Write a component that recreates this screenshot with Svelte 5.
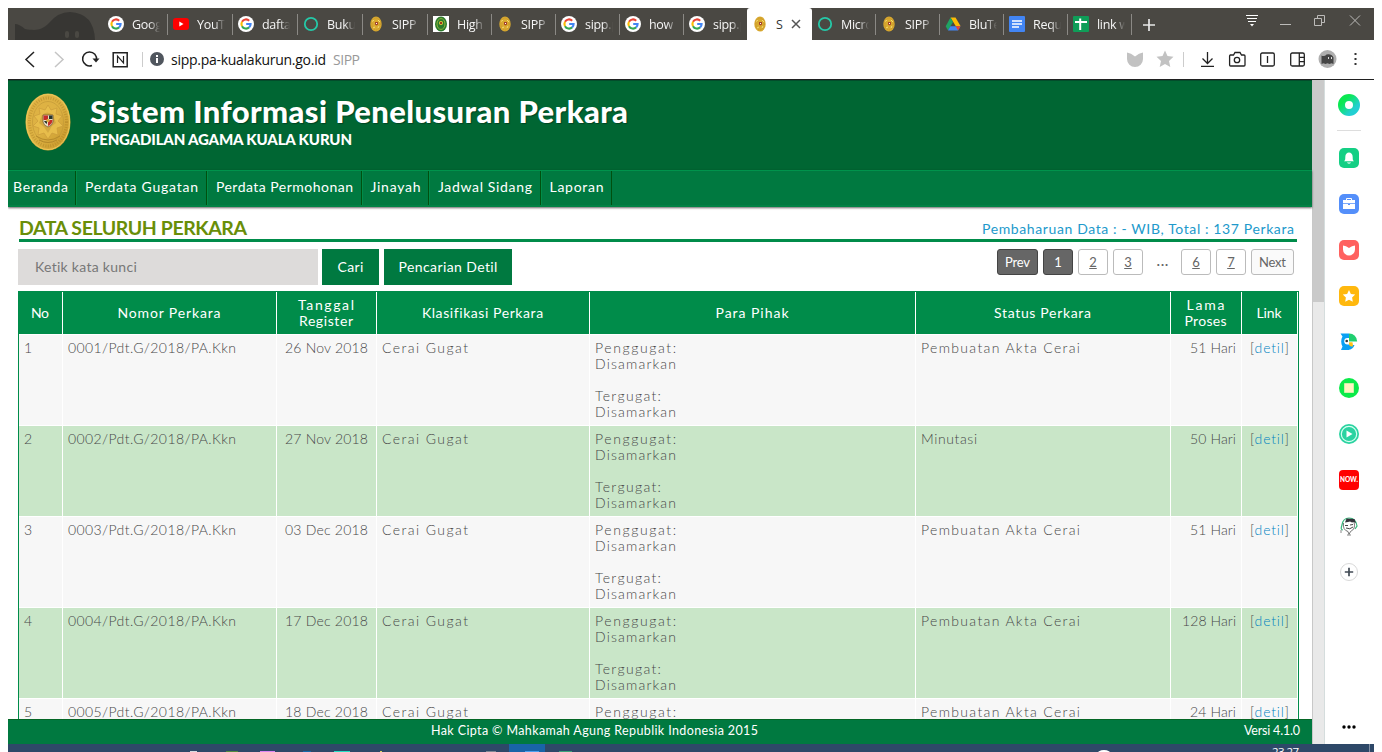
<script>
  const tabs = [
    ['google', 'Goog', 65], ['youtube', 'YouT', 65], ['google', 'dafta', 65], ['ring', 'Buku', 65],
    ['seal', 'SIPP', 65], ['badge', 'High', 64], ['seal', 'SIPP', 64], ['google', 'sipp.p', 64],
    ['google', 'how', 64], ['google', 'sipp.p', 63], ['seal', 'S', 65], ['ring', 'Micro', 64],
    ['seal', 'SIPP', 64], ['drive', 'BluTe', 64], ['docs', 'Requ', 64], ['sheets', 'link w', 64]
  ];
  const menu = [
    ['Beranda', 55, 68], ['Perdata Gugatan', 113, 131], ['Perdata Permohonan', 137, 155],
    ['Jinayah', 50, 67], ['Jadwal Sidang', 94, 112], ['Laporan', 54, 71]
  ];
  const heads = [
    [['No', 18]], [['Nomor Perkara', 103]], [['Tanggal', 56], ['Register', 54]],
    [['Klasifikasi Perkara', 121]], [['Para Pihak', 73]], [['Status Perkara', 97]],
    [['Lama', 38], ['Proses', 42]], [['Link', 25]]
  ];
  const rows = [
    ['1', '0001/Pdt.G/2018/PA.Kkn', '26 Nov 2018', 'Pembuatan Akta Cerai', 159, '51 Hari', 46],
    ['2', '0002/Pdt.G/2018/PA.Kkn', '27 Nov 2018', 'Minutasi', 56, '50 Hari', 46],
    ['3', '0003/Pdt.G/2018/PA.Kkn', '03 Dec 2018', 'Pembuatan Akta Cerai', 159, '51 Hari', 46],
    ['4', '0004/Pdt.G/2018/PA.Kkn', '17 Dec 2018', 'Pembuatan Akta Cerai', 159, '128 Hari', 54],
    ['5', '0005/Pdt.G/2018/PA.Kkn', '18 Dec 2018', 'Pembuatan Akta Cerai', 159, '24 Hari', 46]
  ];
  const side = ['bell', 'case', 'pocket', 'star', 'bird', 'note', 'play', 'now', 'face', 'plus'];

  // Tracks a label out so that it spans the given width.
  function fit(node, width) {
    const gap = (width - node.getBoundingClientRect().width) / Math.max(1, node.textContent.length - 1);
    node.style.letterSpacing = `${gap}px`;
    node.style.marginRight = `${-gap}px`;
  }
</script>

{#snippet t(text, width)}<span class="t" use:fit={width}>{text}</span>{/snippet}

{#snippet seal()}
  <svg width="16" height="16" viewBox="0 0 16 16"><ellipse cx="8" cy="8" rx="5.7" ry="7.6" fill="#d9a92f" /><ellipse cx="8" cy="8" rx="4.2" ry="6" fill="none" stroke="#c4932a" stroke-dasharray="1 1.2" /><path d="M4 5.5 6 4M5 12l2-1M10 4l2 2M10 12l1-2" stroke="#f6dc73" /><path d="M7 6h3v2.500l-1.500 1L7 8.500z" fill="#a5432a" /><path d="M8 7h1v1H8z" fill="#fff" /></svg>
{/snippet}

{#snippet favicon(kind)}
  {#if kind === 'google'}
    <svg width="16" height="16" viewBox="0 0 16 16"><circle cx="8" cy="8" r="8" fill="#fff" /><g fill="none" stroke-width="2.1"><path d="M11.2 4.7A4.6 4.6 0 0 0 4 5.8" stroke="#ea4335" /><path d="M4 5.8a4.6 4.6 0 0 0 0 4.4" stroke="#fbbc05" /><path d="M4 10.2a4.6 4.6 0 0 0 7.1 1.2" stroke="#34a853" /><path d="M11.1 11.4A4.5 4.5 0 0 0 12.6 8H8.2" stroke="#4285f4" /></g></svg>
  {:else if kind === 'youtube'}
    <svg width="16" height="16" viewBox="0 0 16 16"><rect x="0" y="2" width="16" height="12" rx="3" fill="#f00" /><path d="m6.3 5.6 4.2 2.4-4.2 2.4z" fill="#fff" /></svg>
  {:else if kind === 'ring'}
    <svg width="16" height="16" viewBox="0 0 16 16"><circle cx="8" cy="8" r="6.2" fill="none" stroke="#25c9a8" stroke-width="1.8" /></svg>
  {:else if kind === 'seal'}
    {@render seal()}
  {:else if kind === 'badge'}
    <svg width="16" height="16" viewBox="0 0 16 16"><path d="M0 0h16v16H0z" fill="#fff" /><ellipse cx="8" cy="8" rx="6" ry="7.5" fill="#2c7a2c" /><ellipse cx="8" cy="8" rx="4" ry="5.4" fill="none" stroke="#8bb53b" /><circle cx="8" cy="7" r="2" fill="#e3c43a" /><path d="M7 6h2v2H7z" fill="#9b3a1d" /></svg>
  {:else if kind === 'drive'}
    <svg width="16" height="16" viewBox="0 0 16 16"><path d="M5.5 1.5h5L15.5 10h-4.8z" fill="#fbbc05" /><path d="M5.5 1.5 8 6 3 14.5.7 10.3z" fill="#1fa463" /><path d="M5.4 10.300h10.100L13 14.500H3z" fill="#4285f4" /><path d="M10.700 10.300h4.800L13 14.500z" fill="#ea4335" /></svg>
  {:else if kind === 'docs'}
    <svg width="16" height="16" viewBox="0 0 16 16"><rect width="16" height="16" rx="1" fill="#4285f4" /><path d="M3 5h10M3 8h10M3 11h7" stroke="#fff" stroke-width="1.700" /></svg>
  {:else}
    <svg width="16" height="16" viewBox="0 0 16 16"><rect width="16" height="16" rx="1" fill="#0f9d58" /><path d="M2 6h12M7.200 2.500V14" stroke="#fff" stroke-width="2" /></svg>
  {/if}
{/snippet}

{#snippet app(kind)}
  <svg width="20" height="20" viewBox="0 0 20 20">
    {#if kind === 'bell'}
      <rect width="20" height="20" rx="5" fill="#14cf84" /><path d="M5 13.300c1.300-1 1.300-2 1.300-4.300C6.300 6 8 4.500 10 4.500S13.700 6 13.700 9c0 2.300 0 3.300 1.300 4.300z" fill="#fff" /><path d="M8 14.500h4c-.5 1.500-3.500 1.500-4 0z" fill="#fff" />
    {:else if kind === 'case'}
      <rect width="20" height="20" rx="5" fill="#548ffa" /><path d="M7.500 6V4.500h5V6" fill="none" stroke="#fff" /><path d="M4 6h12v3H4zM4 9.800h12V15H4z" fill="#fff" /><path d="M9 10.500h2" stroke="#548ffa" />
    {:else if kind === 'pocket'}
      <rect width="20" height="20" rx="5" fill="#ff615f" /><path d="M4 5.500q3 0 6 2.500 3-2.500 6-2.500V9.500a6 6 0 0 1-12 0z" fill="#fff" />
    {:else if kind === 'star'}
      <rect width="20" height="20" rx="5" fill="#ffb80e" /><path d="m10 4 1.900 3.900 4.300.6-3.100 3 .7 4.300-3.800-2-3.800 2 .7-4.300-3.100-3 4.300-.6z" fill="#fff" />
    {:else if kind === 'bird'}
      <path d="M1.500 1.500H10V18H2L3.500 14.500C1.800 12 1.800 7 3.500 4.500z" fill="#09a0f3" /><path d="M9 13h6.500Q14 17.500 9 18z" fill="#09a0f3" /><path d="M10 6v6.500H8.500A3.200 3.200 0 0 1 8.500 6z" fill="#fff" /><path d="M10 1.500a8 8 0 0 1 8.200 8H10z" fill="#20cf70" /><path d="M10 10.200h3.500l.5 4q-3 1-4-1.500z" fill="#ffc21a" /><circle cx="7.700" cy="9" r="1.300" fill="#333" />
    {:else if kind === 'note'}
      <circle cx="10" cy="10" r="10" fill="#0bea49" /><path d="M5.200 5.200h9.600v9.600H5.200z" fill="#fff4c2" />
    {:else if kind === 'play'}
      <circle cx="10" cy="10" r="10" fill="#2bd3a1" /><circle cx="10" cy="10" r="7.700" fill="none" stroke="#d7fff1" stroke-width="1.200" /><path d="m7.500 6.500 6 3.500-6 3.500z" fill="#fff" />
    {:else if kind === 'now'}
      <rect width="20" height="20" rx="4" fill="#f00" /><text x="1" y="12.300" textLength="18" lengthAdjust="spacingAndGlyphs" class="now">NOW.</text>
    {:else if kind === 'face'}
      <path d="M4 14Q1 14 3 9q1-7 7-7 7 0 8 8l-2 3" fill="#fff" stroke="#38b77c" stroke-width="1.200" /><path d="M4.500 7q-1 7 4.500 8.500l1 3 1.500-3Q17 13 15 6" fill="#fff" stroke="#555" stroke-width=".8" /><path d="M6 6.500 7.500 2.500l8 .5 1.500 4.500-2-1.500-2 .5-2-1-2 .5z" fill="#34343b" /><path d="M6 9.500h3M11 9l3-.5M7 12q4 2 7-1" fill="none" stroke="#333" stroke-width=".9" /><path d="M2 14v3M8 19h4" stroke="#888" />
    {:else}
      <circle cx="10" cy="10" r="8.500" fill="#fff" stroke="#d9d9d9" /><path d="M5.800 10h8.400M10 5.800v8.400" stroke="#414a54" stroke-width="1.700" />
    {/if}
  </svg>
{/snippet}

<div class="window">
  <div class="tabstrip">
    <svg class="ghost" width="95" height="32" viewBox="0 0 95 32"><path d="M7 32V16q4 0 10 5c12 2 17 1 24-6Q50 4 62 4q24 1 25 28z" fill="#373633" /><rect x="57" y="23" width="4" height="7" rx="2" fill="#4a4843" /><rect x="67" y="23" width="4" height="7" rx="2" fill="#4a4843" /></svg>
    {#each tabs as [icon, label, width], i}
      <div class="tab" class:active={i === 10} class:before={i === 9} style:width="{width}px">
        {@render favicon(icon)}
        <span class="label">{label}</span>
        {#if i === 10}<svg class="close" width="10" height="10" viewBox="0 0 10 10"><path d="m1 1 8 8M9 1 1 9" stroke="#555" stroke-width="1.500" /></svg>{/if}
      </div>
    {/each}
    <svg class="add" width="12" height="12" viewBox="0 0 12 12"><path d="M0 6h12M6 0v12" stroke="#e8e8e8" stroke-width="1.700" /></svg>
    <svg class="winbtns" width="120" height="14" viewBox="0 0 120 14"><g fill="none" stroke="#ddd"><path d="M0 1.500h12M1 4.500h10M2 7.500h8" stroke="#fff" /><path d="m4 10 2 2.500L8 10z" fill="#fff" stroke="none" /><path d="M34 10.500h11M68.500 4.500h7v7h-7zM71.500 4.500v-3h7v7h-3M104 1.500l10 10M114 1.500l-10 10" stroke="#bcbbb9" /></g></svg>
  </div>

  <div class="address">
    <svg width="106" height="20" viewBox="0 0 106 20"><g fill="none" stroke="#222" stroke-width="1.500"><path d="m12 3-8 7.500 8 7.500" /><path d="m33 3 8 7.500-8 7.500" stroke="#c5c5c5" /><path d="M70 16.500A7 7 0 1 1 74.500 11" /><path d="m70.500 9.500 7 0-3.500 4z" fill="#222" stroke="none" /><path d="M91.700 3.700h14v14H91.700z" transform="translate(-.5)" /><path d="M95.500 14V7l6 7V7" stroke-width="1.200" /></g></svg>
    <i class="bar"></i>
    <svg class="info" width="14" height="14" viewBox="0 0 14 14"><circle cx="7" cy="7" r="7" fill="#50565e" /><path d="M6 6h2v5H6zM6 3h2v2H6z" fill="#fff" /></svg>
    <span class="url">{@render t('sipp.pa-kualakurun.go.id', 155)}</span>
    <span class="site">{@render t('SIPP', 27)}</span>
    <svg class="tools" width="236" height="20" viewBox="0 0 236 20"><path d="M0 3.500q4 .5 8 4 4-3.500 8-4V10a8 8 0 0 1-16 0z" fill="#c2c2c2" /><path d="m38 1.500 2.500 5.500 6 .7-4.500 4.200 1.300 6L38 15l-5.300 2.900 1.300-6-4.500-4.200 6-.7z" fill="#c2c2c2" /><path d="M56.500 3v15" stroke="#ccc" /><g fill="none" stroke="#222" stroke-width="1.300"><path d="M80.500 3v11M75.500 9.500l5 5 5-5M74 17.300h13M103 6h3.500l1.500-2.500h5l1.500 2.500h2.500q1 0 1 1v9q0 1-1 1h-13.400q-1 0-1-1V7q0-1 1-1z" /><circle cx="110" cy="11" r="2.700" /><rect x="133.700" y="4" width="13.600" height="13" rx="1.500" /><path d="M140.500 7v7" /><rect x="163.700" y="4" width="13.600" height="13" rx="1.500" /><path d="M172.300 4v13M172.300 8.300h5M172.300 12.600h5" /></g><circle cx="200.500" cy="10" r="9" fill="#afafaf" /><path d="M194.500 15V6.500q3 1.500 5-1 5-1 7 3v6.500l-2-.8-2 .8-2-.8-2 .8-2-.8z" fill="#454545" /><path d="M201.500 8v2M204.500 8v2" stroke="#ddd" /><g fill="#333"><rect x="227.500" y="4" width="2" height="2" /><rect x="227.500" y="9" width="2" height="2" /><rect x="227.500" y="14" width="2" height="2" /></g></svg>
  </div>

  <div class="body">
    <div class="page">
      <header>
        <svg width="46" height="58" viewBox="0 0 46 58"><defs><linearGradient id="gold" x2="1" y2="1"><stop stop-color="#e0b244" /><stop offset=".5" stop-color="#ddb243" /><stop offset="1" stop-color="#c59427" /></linearGradient></defs><ellipse cx="23" cy="29" rx="22.500" ry="28.500" fill="url(#gold)" /><ellipse cx="23" cy="29" rx="21.500" ry="27.500" fill="none" stroke="#edc85b" /><ellipse cx="23" cy="29" rx="18.500" ry="24" fill="none" stroke="#a97d22" stroke-width="3" stroke-dasharray="1 1.500" opacity=".45" /><ellipse cx="23" cy="29" rx="15.500" ry="20.500" fill="none" stroke="#c39a38" stroke-width=".7" /><path d="m23 12 3 5 6-2-1 6 6 2-4 5 5 5-6 2 1 7-6-2-4 6-4-6-6 2 1-7-6-2 5-5-4-5 6-2-1-6 6 2z" fill="#e7bd4b" stroke="#cb9c3b" stroke-width=".7" /><path d="M17 22q5-5 11 0l3 8-4 3-4 7-4-6-5-4z" fill="#d3a840" /><path d="M18 22h10v7q-1 4-5 5-4-1-5-5z" fill="#e8dfc4" stroke="#6f522b" stroke-width=".7" /><path d="M18.500 22.500H23V27h-4.500zM23 27h4.500q0 4-4.500 6z" fill="#c62c28" /><path d="M24 22.500h3.500V26H24zM19 28h3v3q-2-1-3-3z" fill="#27352c" /><circle cx="23" cy="27.500" r="1.700" fill="#d9a63a" /><path d="M11 43q12 8 24 0M14 47q9 5 18 0" fill="none" stroke="#b58a2b" /></svg>
        <div>
          <h1>{@render t('Sistem Informasi Penelusuran Perkara', 538)}</h1>
          <h2>{@render t('PENGADILAN AGAMA KUALA KURUN', 262)}</h2>
        </div>
      </header>
      <nav>
        {#each menu as [label, w, box]}
          <a style:width="{box}px">{@render t(label, w)}</a>
        {/each}
      </nav>

      <main>
        <div class="heading">
          <h3>{@render t('DATA SELURUH PERKARA', 228)}</h3>
          <span>{@render t('Pembaharuan Data : - WIB, Total : 137 Perkara', 312)}</span>
        </div>
        <div class="controls">
          <div class="input">{@render t('Ketik kata kunci', 102)}</div>
          <div class="btn cari">{@render t('Cari', 26)}</div>
          <div class="btn detail">{@render t('Pencarian Detil', 99)}</div>
          <div class="pager">
            <b class="on prev">{@render t('Prev', 25)}</b><b class="on">1</b><b><u>2</u></b><b><u>3</u></b><em>...</em><b><u>6</u></b><b><u>7</u></b><b class="next">{@render t('Next', 27)}</b>
          </div>
        </div>
        <div class="table">
          <div class="row head">
            {#each heads as lines}
              <div>{#each lines as [label, w]}<p>{@render t(label, w)}</p>{/each}</div>
            {/each}
          </div>
          {#each rows as [no, number, date, status, sw, days, dw], i}
            <div class="row" class:even={i % 2 === 1}>
              <div>{no}</div>
              <div>{@render t(number, 168)}</div>
              <div class="center">{@render t(date, 83)}</div>
              <div>{@render t('Cerai Gugat', 86)}</div>
              <div>
                <p>{@render t('Penggugat:', 81)}</p>
                {#if i < 4}
                  <p>{@render t('Disamarkan', 81)}</p>
                  <p class="gap">{@render t('Tergugat:', 66)}</p>
                  <p>{@render t('Disamarkan', 81)}</p>
                {/if}
              </div>
              <div>{@render t(status, sw)}</div>
              <div class="right">{@render t(days, dw)}</div>
              <div class="center"><span class="t" use:fit={39}>[<a class="link">detil</a>]</span></div>
            </div>
          {/each}
        </div>
      </main>

      <footer>
        <span class="copy">{@render t('Hak Cipta © Mahkamah Agung Republik Indonesia 2015', 327)}</span>
        <span>{@render t('Versi 4.1.0', 56)}</span>
      </footer>
    </div>
    <div class="scroll"><i></i></div>
    <aside>
      <svg class="orb" width="22" height="22" viewBox="0 0 22 22"><defs><linearGradient id="orb" x2="1" y2="1"><stop offset=".2" stop-color="#0be851" /><stop offset=".8" stop-color="#22cfd2" /></linearGradient></defs><circle cx="11" cy="11" r="7.500" fill="#fff" stroke="url(#orb)" stroke-width="7" /></svg>
      <hr />
      {#each side as kind}{@render app(kind)}{/each}
      <svg class="more" width="14" height="4" viewBox="0 0 14 4"><circle cx="2" cy="2" r="1.700" /><circle cx="7" cy="2" r="1.700" /><circle cx="12" cy="2" r="1.700" /></svg>
    </aside>
  </div>

  <div class="taskbar">
    <svg width="600" height="8" viewBox="0 0 600 8"><path d="M501 0h36v8h-36z" fill="#1964a8" /><path d="M182 7h7v1h-7z" fill="#d5dae0" /><path d="M218 7h12v1h-12z" fill="#538b3e" /><path d="M252 7h15v1h-15z" fill="#dd85f2" /><path d="M295 7h8v1h-8z" fill="#1769aa" /><path d="M326 7h16v1h-16z" fill="#25e0c5" /><path d="M372 7h2v1h-2z" fill="#ddd65d" /><path d="M478 7h10v1h-10z" fill="#7f8894" /><path d="M517 7h14v1h-14z" fill="#4ba0ef" /><path d="M551 7h13v1h-13z" fill="#3ba37a" /></svg>
    <svg class="dot" width="14" height="8" viewBox="0 0 14 8"><ellipse cx="7" cy="10" rx="7" ry="4" fill="#fff" /></svg>
    <span>{@render t('23.27', 27)}</span>
    <i></i>
  </div>
</div>

<style>
  :global(body) { background: #fff; overflow: hidden; }
  * { box-sizing: border-box; margin: 0; padding: 0; }
  svg { display: block; flex: none; }
  .t { display: inline-block; white-space: nowrap; }
  .window { width: 1366px; height: 744px; margin: 8px 0 0 8px; display: flex; flex-direction: column; overflow: hidden; font: 14px/16px "Century Gothic", Lato, sans-serif; }
  .tabstrip { height: 32px; flex: none; background: #4a4843; display: flex; font: 12.5px "Segoe UI", "Open Sans", sans-serif; color: #f5f5f5; }
  .ghost { width: 95px; }
  .tab { flex: none; display: flex; align-items: center; padding-left: 5px; position: relative; }
  .tab::after { content: ""; position: absolute; right: 0; top: 6px; width: 1px; height: 21px; background: #8b8985; }
  .tab.before::after, .tab.active::after { display: none; }
  .label { margin-left: 8px; width: 28px; overflow: hidden; white-space: nowrap; letter-spacing: -0.3px; mask-image: linear-gradient(90deg, #000 62%, transparent 100%); }
  .active { background: #fff; color: #333; border-radius: 3px 3px 0 0; }
  .active .label { width: 8px; mask-image: none; }
  .close { margin-left: 7px; }
  .add { margin: 11px 0 0 11px; }
  .winbtns { margin: 6px 0 0 91px; }
  .address { height: 40px; flex: none; display: flex; align-items: center; border-bottom: 1px solid #202020; padding: 0 11px 1px 14px; font: 14px "Segoe UI", "Open Sans", sans-serif; }
  .bar { width: 1px; height: 15px; background: #ccc; margin-left: 14px; }
  .info { margin: 0 7px; }
  .url { color: #111; }
  .site { color: #999; margin-left: 7px; }
  .tools { margin-left: auto; }
  .body { flex: 1; min-height: 0; display: flex; }
  .page { width: 1304px; display: flex; flex-direction: column; }
  header { height: 90px; flex: none; background: #063; display: flex; padding: 12px 17px 0; gap: 19px; color: #fff; border-top: 1px solid #034c2b; }
  h1 { font-size: 31px; line-height: 36px; font-weight: 900; text-shadow: 1px 1px 1px #0005; }
  h2 { font-size: 15px; line-height: 20px; font-weight: 900; }
  nav { height: 37px; flex: none; background: #007940; border-top: 1px solid #00934c; border-bottom: 2px solid #008244; display: flex; box-shadow: 0 1px 2px #0009; color: #fff; z-index: 1; }
  nav a { border-right: 1px solid #00500f; border-left: 1px solid #008c49; display: flex; align-items: center; justify-content: center; padding-bottom: 2px; }
  nav a:first-child { border-left: 0; justify-content: flex-start; padding-left: 5px; }
  main { flex: 1; min-height: 0; overflow: hidden; padding: 9px 13px 0 10px; }
  .heading { height: 26px; margin: 0 2px 0 1px; border-bottom: 3px solid #008c4a; display: flex; justify-content: space-between; color: #2199cb; padding-right: 3px; line-height: 26px; }
  h3 { font-size: 19.5px; line-height: 24px; color: #698e08; font-weight: 700; }
  .controls { display: flex; height: 49px; padding-top: 7px; color: #fff; }
  .input { width: 300px; height: 36px; background: #dddbda; color: #777; line-height: 36px; padding-left: 17px; }
  .btn { height: 36px; background: #007940; line-height: 36px; text-align: center; }
  .cari { width: 57px; margin-left: 4px; }
  .detail { width: 128px; margin-left: 5px; }
  .pager { margin: 0 5px 0 auto; display: flex; gap: 5px; font-size: 13px; color: #666; }
  b, em { font-weight: 400; font-style: normal; width: 30px; height: 26px; border: 1px solid #bbb; border-radius: 3px; text-align: center; line-height: 24px; }
  em { width: 28px; border: 0; letter-spacing: 1px; padding-left: 2px; font-weight: 700; }
  b.on { background: #666; color: #fff; border-color: #444; }
  b.prev { width: 41px; }
  b.next { width: 43px; background: #fafafa; }
  .table { width: 1281px; border: 1px solid #008c4a; border-bottom: 0; color: #484848; font-weight: 300; }
  .row { display: grid; grid-template-columns: 44px 214px 100px 213px 326px 255px 71px 56px; height: 91px; background: #fff; }
  .row > div { background: #f7f7f7; border-right: 1px solid #fff; border-bottom: 1px solid #fff; padding: 5px 0 0 5px; }
  .row.even > div { background: #c9e6c8; }
  .row > .center { text-align: center; padding-left: 0; }
  .row > .right { text-align: right; padding: 5px 5px 0 0; }
  .gap { margin-top: 16px; }
  .row.head { height: 43px; color: #fff; font-weight: 400; }
  .row.head > div { background: #008c4a; padding: 0 1px 0 0; display: flex; flex-direction: column; align-items: center; justify-content: center; }
  .link { color: #0083c0; }
  footer { height: 25px; flex: none; background: #007940; border-top: 1px solid #046625; color: #fff; font-size: 12.5px; line-height: 22px; display: flex; justify-content: space-between; padding: 0 12px 0 423px; }
  .scroll { width: 13px; background: #e9e9e9; border-right: 1px solid #d5dddd; border-left: 1px solid #c8c8c8; }
  .scroll i { display: block; height: 222px; background: #cacaca; }
  aside { width: 49px; height: 664px; display: flex; flex-direction: column; align-items: center; gap: 26px; padding: 14px 1px 0 0; }
  aside hr { width: 24px; height: 1px; border: 0; background: #ddd; margin: -12px 0 -9px; }
  .more { margin-top: 117px; }
  .now { font: 900 6.5px Lato, sans-serif; fill: #fff; }
  .taskbar { height: 8px; flex: none; background: #2e4868; display: flex; overflow: hidden; color: #fff; font: 11.5px/12px "Segoe UI", "Open Sans", sans-serif; }
  .dot { margin-left: 489px; }
  .taskbar span { margin: 2px 0 0 161px; }
  .taskbar span .t, .taskbar :global(.t) { margin-top: 0; margin-left: 0; }
  .taskbar i { width: 1px; height: 8px; background: #8190a5; margin-left: 70px; }
</style>
